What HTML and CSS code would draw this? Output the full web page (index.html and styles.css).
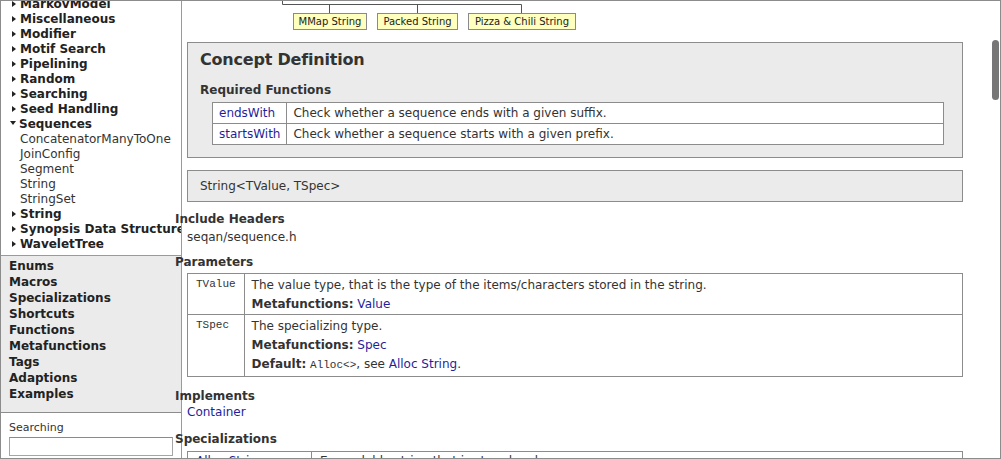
FILE: index.html
```
<!DOCTYPE html>
<html>
<head>
<meta charset="utf-8">
<link rel="stylesheet" href="styles.css">
</head>
<body>
<div class="window">
  <aside class="sidebar">
    <div class="tree-panel">
      <ul class="nav-tree">
        <li class="node">MarkovModel</li>
        <li class="node">Miscellaneous</li>
        <li class="node">Modifier</li>
        <li class="node">Motif Search</li>
        <li class="node">Pipelining</li>
        <li class="node">Random</li>
        <li class="node">Searching</li>
        <li class="node">Seed Handling</li>
        <li class="node open">Sequences</li>
        <li class="leaf">ConcatenatorManyToOne</li>
        <li class="leaf">JoinConfig</li>
        <li class="leaf">Segment</li>
        <li class="leaf">String</li>
        <li class="leaf">StringSet</li>
        <li class="node">String</li>
        <li class="node">Synopsis Data Structure</li>
        <li class="node">WaveletTree</li>
      </ul>
    </div>
    <ul class="cat-panel">
      <li>Enums</li>
      <li>Macros</li>
      <li>Specializations</li>
      <li>Shortcuts</li>
      <li>Functions</li>
      <li>Metafunctions</li>
      <li>Tags</li>
      <li>Adaptions</li>
      <li>Examples</li>
    </ul>
    <div class="search-panel">
      <div class="search-label">Searching</div>
      <input class="search-input" type="text">
    </div>
  </aside>

  <main class="content">
    <div class="hierarchy">
      <svg class="hier-lines" width="360" height="12" viewBox="0 0 360 12">
        <path d="M100.5 0 V3.5 H339.5 M147.5 3.5 V12 M235.5 3.5 V12 M339.5 3.5 V12" fill="none" stroke="#555" stroke-width="1"/>
      </svg>
      <div class="hier-boxes">
        <span class="hbox hbox-mmap">MMap String</span>
        <span class="hbox hbox-packed">Packed String</span>
        <span class="hbox hbox-pizza">Pizza &amp; Chili String</span>
      </div>
    </div>

    <section class="concept">
      <h2>Concept Definition</h2>
      <h3>Required Functions</h3>
      <table class="func-table">
        <tr><td class="c1"><a>endsWith</a></td><td>Check whether a sequence ends with a given suffix.</td></tr>
        <tr><td class="c1"><a>startsWith</a></td><td>Check whether a sequence starts with a given prefix.</td></tr>
      </table>
    </section>

    <div class="signature">String&lt;TValue, TSpec&gt;</div>

    <h3 class="sec">Include Headers</h3>
    <div class="sec-body">seqan/sequence.h</div>

    <h3 class="sec">Parameters</h3>
    <table class="param-table">
      <tr>
        <td class="pname">TValue</td>
        <td class="pdesc">
          <div>The value type, that is the type of the items/characters stored in the string.</div>
          <div class="meta"><b>Metafunctions:</b> <a>Value</a></div>
        </td>
      </tr>
      <tr>
        <td class="pname">TSpec</td>
        <td class="pdesc pdesc-last">
          <div>The specializing type.</div>
          <div class="meta"><b>Metafunctions:</b> <a>Spec</a></div>
          <div class="meta"><b>Default:</b> <code>Alloc&lt;&gt;</code>, see <a>Alloc String</a>.</div>
        </td>
      </tr>
    </table>

    <h3 class="sec sec-wide">Implements</h3>
    <div class="sec-body sec-tight"><a>Container</a></div>

    <h3 class="sec sec-wide">Specializations</h3>
    <table class="spec-table">
      <tr><td class="sname"><a>Alloc String</a></td><td>Expandable string that is stored on heap.</td></tr>
    </table>

    <div class="scroll-thumb"></div>
  </main>
</div>
</body>
</html>
```

FILE: styles.css
```
html, body {
  margin: 0;
  padding: 0;
  background: #fff;
}
body {
  font-family: "DejaVu Sans", Verdana, sans-serif;
  font-size: 12px;
  color: #333;
}
a {
  color: #1f1f9c;
  text-decoration: none;
}
.window {
  width: 1001px;
  height: 459px;
  box-sizing: border-box;
  border: 1px solid #8c8c8c;
  display: flex;
  overflow: hidden;
  position: relative;
}

/* ---------- sidebar ---------- */
.sidebar {
  width: 180px;
  flex: none;
  border-right: 1px solid #9a9a9a;
  display: flex;
  flex-direction: column;
  overflow: hidden;
  position: relative;
  z-index: 0;
}
.tree-panel {
  height: 254px;
  flex: none;
  overflow: hidden;
  border-bottom: 1px solid #9a9a9a;
}
.nav-tree {
  list-style: none;
  margin: -4px 0 0 0;
  padding: 0;
  white-space: nowrap;
}
.nav-tree li {
  line-height: 15px;
  height: 15px;
  font-size: 12px;
}
.node {
  font-weight: bold;
  color: #222;
  padding-left: 11px;
}
.node::before {
  content: "";
  display: inline-block;
  width: 0;
  height: 0;
  border-left: 4px solid #222;
  border-top: 3.5px solid transparent;
  border-bottom: 3.5px solid transparent;
  margin-right: 4px;
  vertical-align: 1px;
}
.node.open {
  padding-left: 9px;
}
.node.open::before {
  border-left: 3.5px solid transparent;
  border-right: 3.5px solid transparent;
  border-top: 4px solid #222;
  border-bottom: 0;
  margin-right: 3px;
  vertical-align: 3px;
}
.leaf {
  padding-left: 19px;
  color: #333;
}
.cat-panel {
  list-style: none;
  margin: 0;
  padding: 2px 0 0 8px;
  background: #ebebeb;
  height: 157px;
  flex: none;
  box-sizing: border-box;
  border-bottom: 1px solid #8c8c8c;
}
.cat-panel li {
  font-weight: bold;
  color: #222;
  line-height: 16px;
  height: 16px;
}
.search-panel {
  flex: 1;
  padding: 8px 0 0 8px;
}
.search-label {
  font-size: 11px;
  line-height: 13px;
  color: #333;
}
.search-input {
  display: block;
  margin: 3px 0 0 0;
  width: 164px;
  height: 19px;
  box-sizing: border-box;
  border: 1px solid #a5a5a5;
  border-top-color: #8a8a8a;
  padding: 0;
  background: #fff;
}

/* ---------- content ---------- */
.content {
  flex: 1;
  position: relative;
  z-index: 1;
  padding: 0 37px 0 5px;
  min-width: 0;
}
.hierarchy {
  height: 29px;
  margin-bottom: 12px;
  margin-left: -5px;
}
.hier-lines {
  display: block;
}
.hier-boxes {
  display: flex;
  gap: 10px;
  padding-left: 111px;
}
.hbox {
  display: block;
  height: 17px;
  box-sizing: border-box;
  border: 1px solid #8a8a8a;
  background: #ffffbe;
  font-size: 10px;
  line-height: 15px;
  padding: 0;
  text-align: center;
  white-space: nowrap;
  color: #222;
}
.hbox-mmap { width: 74px; }
.hbox-packed { width: 81px; }
.hbox-pizza { width: 108px; }
.concept {
  background: #ebebeb;
  border: 1px solid #8c8c8c;
  padding: 0 18px 12px 12px;
}
.concept h2 {
  margin: 7px 0 0 0;
  font-size: 16px;
  letter-spacing: -0.2px;
  line-height: 20px;
  color: #333;
}
.concept h3 {
  margin: 13px 0 0 0;
  font-size: 12px;
  line-height: 15px;
  color: #333;
}
table {
  border-collapse: collapse;
  background: #fff;
}
td {
  border: 1px solid #8c8c8c;
  vertical-align: top;
  font-size: 12px;
}
.func-table {
  margin: 4px 0 0 12px;
  width: calc(100% - 12px);
}
.func-table td {
  padding: 3px 6px;
  line-height: 14px;
  height: 14px;
}
.func-table td.c1 {
  width: 61px;
}
.signature {
  margin-top: 12px;
  background: #ebebeb;
  border: 1px solid #8c8c8c;
  padding: 8px 12px;
  line-height: 14px;
}
h3.sec {
  margin: 10px 0 0 -12px;
  font-size: 12px;
  line-height: 15px;
  color: #333;
}
h3.sec-wide {
  margin-top: 12px;
}
.sec-body {
  margin-top: 2px;
  line-height: 16px;
}
.sec-body.sec-tight {
  margin-top: 0;
}
.param-table {
  width: 100%;
  margin-top: 3px;
}
.pname {
  width: 38px;
  padding: 2px 8px 0 8px;
  font-family: "Liberation Mono", "Courier New", monospace;
  font-size: 11px;
  line-height: 16px;
  color: #333;
}
.pdesc {
  padding: 2px 8px 1px 7px;
  line-height: 18px;
}
.pdesc-last {
  padding-bottom: 2px;
}
.pdesc .meta {
  margin-top: 1px;
}
.pdesc b {
  color: #333;
}
code {
  font-family: "Liberation Mono", "Courier New", monospace;
  font-size: 11px;
}
.spec-table {
  width: 100%;
  margin-top: 4px;
}
.spec-table td {
  padding: 1px 8px 4px;
  line-height: 16px;
}
.spec-table .sname {
  width: 107px;
}
.scroll-thumb {
  position: absolute;
  right: 1px;
  top: 39px;
  width: 7px;
  height: 60px;
  border-radius: 4px;
  background: #767676;
}
```
